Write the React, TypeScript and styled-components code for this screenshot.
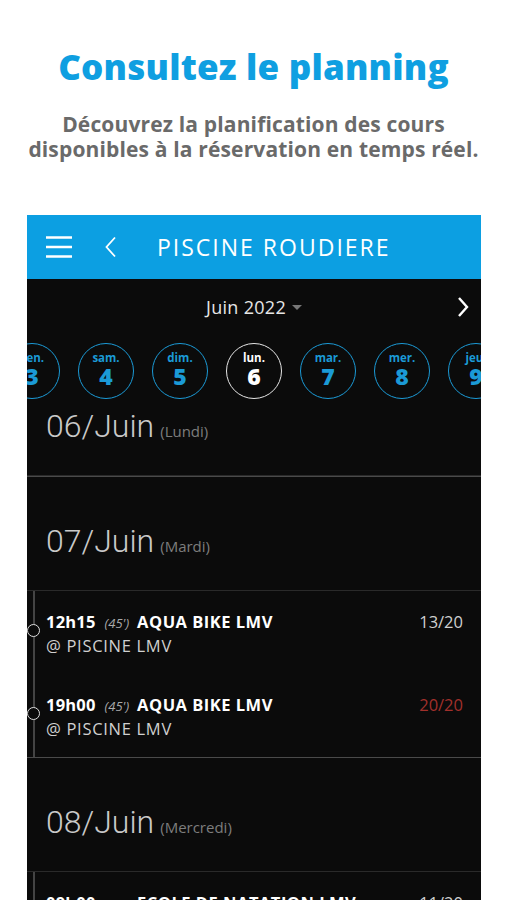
import React from "react";
import styled, { createGlobalStyle } from "styled-components";

const GlobalStyle = createGlobalStyle`
  html, body {
    margin: 0;
    padding: 0;
    background: #fff;
  }
  body {
    font-family: "Open Sans", "Liberation Sans", sans-serif;
    overflow: hidden;
  }
`;

interface Day {
  label: string;
  num: number;
  selected?: boolean;
}

interface Session {
  time: string;
  duration: string;
  name: string;
  place: string;
  count: string;
  full?: boolean;
}

interface DayBlock {
  date: string;
  weekday: string;
  sessions: Session[];
}

const days: Day[] = [
  { label: "ven.", num: 3 },
  { label: "sam.", num: 4 },
  { label: "dim.", num: 5 },
  { label: "lun.", num: 6, selected: true },
  { label: "mar.", num: 7 },
  { label: "mer.", num: 8 },
  { label: "jeu.", num: 9 },
];

const blocks: DayBlock[] = [
  { date: "06/Juin", weekday: "Lundi", sessions: [] },
  {
    date: "07/Juin",
    weekday: "Mardi",
    sessions: [
      { time: "12h15", duration: "(45')", name: "AQUA BIKE LMV", place: "@ PISCINE LMV", count: "13/20" },
      { time: "19h00", duration: "(45')", name: "AQUA BIKE LMV", place: "@ PISCINE LMV", count: "20/20", full: true },
    ],
  },
  {
    date: "08/Juin",
    weekday: "Mercredi",
    sessions: [
      { time: "09h00", duration: "(45')", name: "ECOLE DE NATATION LMV", place: "@ PISCINE LMV", count: "11/20" },
    ],
  },
];

const App = () => {
  return (
    <Page>
      <GlobalStyle />
      <Intro>
        <Title>Consultez le planning</Title>
        <Subtitle>
          Découvrez la planification des cours
          <br />
          disponibles à la réservation en temps réel.
        </Subtitle>
      </Intro>
      <Screen>
        <TopBar>
          <IconBox>
            <svg width="26" height="22" viewBox="0 0 26 22">
              <path d="M0 1.5h26M0 11h26M0 20.5h26" stroke="#fff" strokeWidth="2.4" />
            </svg>
          </IconBox>
          <IconBox>
            <svg width="12" height="22" viewBox="0 0 12 22">
              <path d="M10 1.5L1.5 11L10 20.5" stroke="#fff" strokeWidth="1.8" fill="none" />
            </svg>
          </IconBox>
          <BarTitle>PISCINE ROUDIERE</BarTitle>
        </TopBar>
        <Content>
          <MonthRow>
            <Month>
              Juin 2022
              <Caret />
            </Month>
            <NextArrow>
              <svg width="12" height="22" viewBox="0 0 12 22">
                <path d="M2 2L10 11L2 20" stroke="#fff" strokeWidth="2.4" fill="none" />
              </svg>
            </NextArrow>
          </MonthRow>
          <DayStrip>
            {days.map((d) => (
              <DayCircle key={d.num} $selected={d.selected}>
                <DayLabel>{d.label}</DayLabel>
                <DayNum>{d.num}</DayNum>
              </DayCircle>
            ))}
          </DayStrip>
          {blocks.map((b, i) => (
            <Section key={b.date}>
              <DateHeader $first={i === 0}>
                <DateText>{b.date}</DateText>
                <Weekday>({b.weekday})</Weekday>
              </DateHeader>
              {b.sessions.length > 0 && (
                <Sessions>
                  {b.sessions.map((s) => (
                    <SessionRow key={s.time}>
                      <Dot />
                      <SessionTop>
                        <Time>{s.time}</Time>
                        <Duration>{s.duration}</Duration>
                        <SessionName>{s.name}</SessionName>
                        <Count $full={s.full}>{s.count}</Count>
                      </SessionTop>
                      <Place>{s.place}</Place>
                    </SessionRow>
                  ))}
                </Sessions>
              )}
            </Section>
          ))}
        </Content>
      </Screen>
    </Page>
  );
};

export default App;

const Page = styled.div`
  width: 507px;
  height: 900px;
  overflow: hidden;
  background: #fff;
`;

const Intro = styled.div`
  display: flex;
  flex-direction: column;
  align-items: center;
  padding-top: 44px;
  height: 215px;
  box-sizing: border-box;
`;

const Title = styled.h1`
  margin: 0;
  font-family: "Open Sans", sans-serif;
  font-weight: 800;
  font-size: 35px;
  line-height: 46px;
  color: #0f9fe1;
  letter-spacing: 0.2px;
`;

const Subtitle = styled.p`
  margin: 22px 0 0;
  text-align: center;
  font-family: "Open Sans", sans-serif;
  font-weight: 700;
  font-size: 21px;
  line-height: 25px;
  color: #6a6a6a;
  letter-spacing: 0.15px;
`;

const Screen = styled.div`
  margin-left: 27px;
  width: 454px;
  height: 685px;
  overflow: hidden;
  background: #0b0b0b;
  display: flex;
  flex-direction: column;
`;

const TopBar = styled.div`
  height: 64px;
  flex: none;
  background: #0c9fe2;
  display: flex;
  align-items: center;
  padding-left: 19px;
`;

const IconBox = styled.div`
  display: flex;
  align-items: center;
  margin-right: 33px;
`;

const BarTitle = styled.div`
  margin-left: 7px;
  color: #fff;
  font-family: "Open Sans", sans-serif;
  font-size: 23px;
  font-weight: 400;
  letter-spacing: 2px;
`;

const Content = styled.div`
  display: flex;
  flex-direction: column;
`;

const MonthRow = styled.div`
  position: relative;
  height: 64px;
  display: flex;
  align-items: flex-start;
  justify-content: center;
  padding-top: 16px;
  box-sizing: border-box;
`;

const Month = styled.div`
  display: flex;
  align-items: center;
  color: #e6e6e6;
  font-family: "Open Sans", sans-serif;
  font-size: 18px;
  letter-spacing: 0.3px;
`;

const Caret = styled.span`
  margin-left: 6px;
  width: 0;
  height: 0;
  border-left: 5px solid transparent;
  border-right: 5px solid transparent;
  border-top: 5px solid #777;
`;

const NextArrow = styled.div`
  position: absolute;
  right: 12px;
  top: 17px;
  display: flex;
`;

const DayStrip = styled.div`
  display: flex;
  gap: 18px;
  margin-left: -27px;
  height: 64px;
  padding-left: 4px;
`;

const DayCircle = styled.div<{ $selected?: boolean }>`
  flex: none;
  width: 54px;
  height: 54px;
  border-radius: 50%;
  border: 1.5px solid ${(p) => (p.$selected ? "#e6e6e6" : "#1b9ad6")};
  color: ${(p) => (p.$selected ? "#fff" : "#1b9ad6")};
  display: flex;
  flex-direction: column;
  align-items: center;
  justify-content: center;
  font-family: "Open Sans", sans-serif;
  font-weight: 700;
`;

const DayLabel = styled.div`
  font-size: 11.5px;
  line-height: 12px;
  margin-top: -1px;
`;

const DayNum = styled.div`
  font-size: 23px;
  line-height: 25px;
  font-weight: 800;
`;

const Section = styled.div`
  display: flex;
  flex-direction: column;
`;

const DateHeader = styled.div<{ $first?: boolean }>`
  display: flex;
  align-items: baseline;
  padding-left: 19px;
  height: ${(p) => (p.$first ? "69px" : "115px")};
  padding-top: ${(p) => (p.$first ? "0px" : "45px")};
  box-sizing: border-box;
  border-bottom: 1px solid #2a2a2a;
  ${(p) => (p.$first ? "" : "border-top: 1px solid #4a4a4a;")}
`;

const DateText = styled.span`
  font-family: Roboto, "Open Sans", sans-serif;
  font-weight: 300;
  font-size: 32px;
  color: #c9c9c9;
`;

const Weekday = styled.span`
  margin-left: 6px;
  font-family: "Open Sans", sans-serif;
  font-size: 15px;
  color: #7d7d7d;
`;

const Sessions = styled.div`
  margin-left: 6px;
  border-left: 2px solid #444;
  display: flex;
  flex-direction: column;
`;

const SessionRow = styled.div`
  position: relative;
  height: 83px;
  padding: 19px 18px 0 11px;
  box-sizing: border-box;
`;

const Dot = styled.span`
  position: absolute;
  left: -8px;
  top: 33px;
  width: 11px;
  height: 11px;
  border-radius: 50%;
  border: 1.5px solid #ddd;
  background: #0b0b0b;
`;

const SessionTop = styled.div`
  display: flex;
  align-items: baseline;
  font-family: "Open Sans", sans-serif;
  color: #fff;
`;

const Time = styled.span`
  font-weight: 700;
  font-size: 16.5px;
  letter-spacing: 0.2px;
`;

const Duration = styled.span`
  margin-left: 9px;
  font-style: italic;
  font-size: 13px;
  color: #aaa;
`;

const SessionName = styled.span`
  margin-left: 8px;
  font-weight: 700;
  font-size: 16.5px;
  letter-spacing: 0.5px;
`;

const Count = styled.span<{ $full?: boolean }>`
  margin-left: auto;
  font-size: 16.5px;
  color: ${(p) => (p.$full ? "#a2302b" : "#d0d0d0")};
`;

const Place = styled.div`
  margin-top: 1px;
  font-family: "Open Sans", sans-serif;
  font-size: 16.5px;
  letter-spacing: 0.7px;
  color: #d0d0d0;
`;
